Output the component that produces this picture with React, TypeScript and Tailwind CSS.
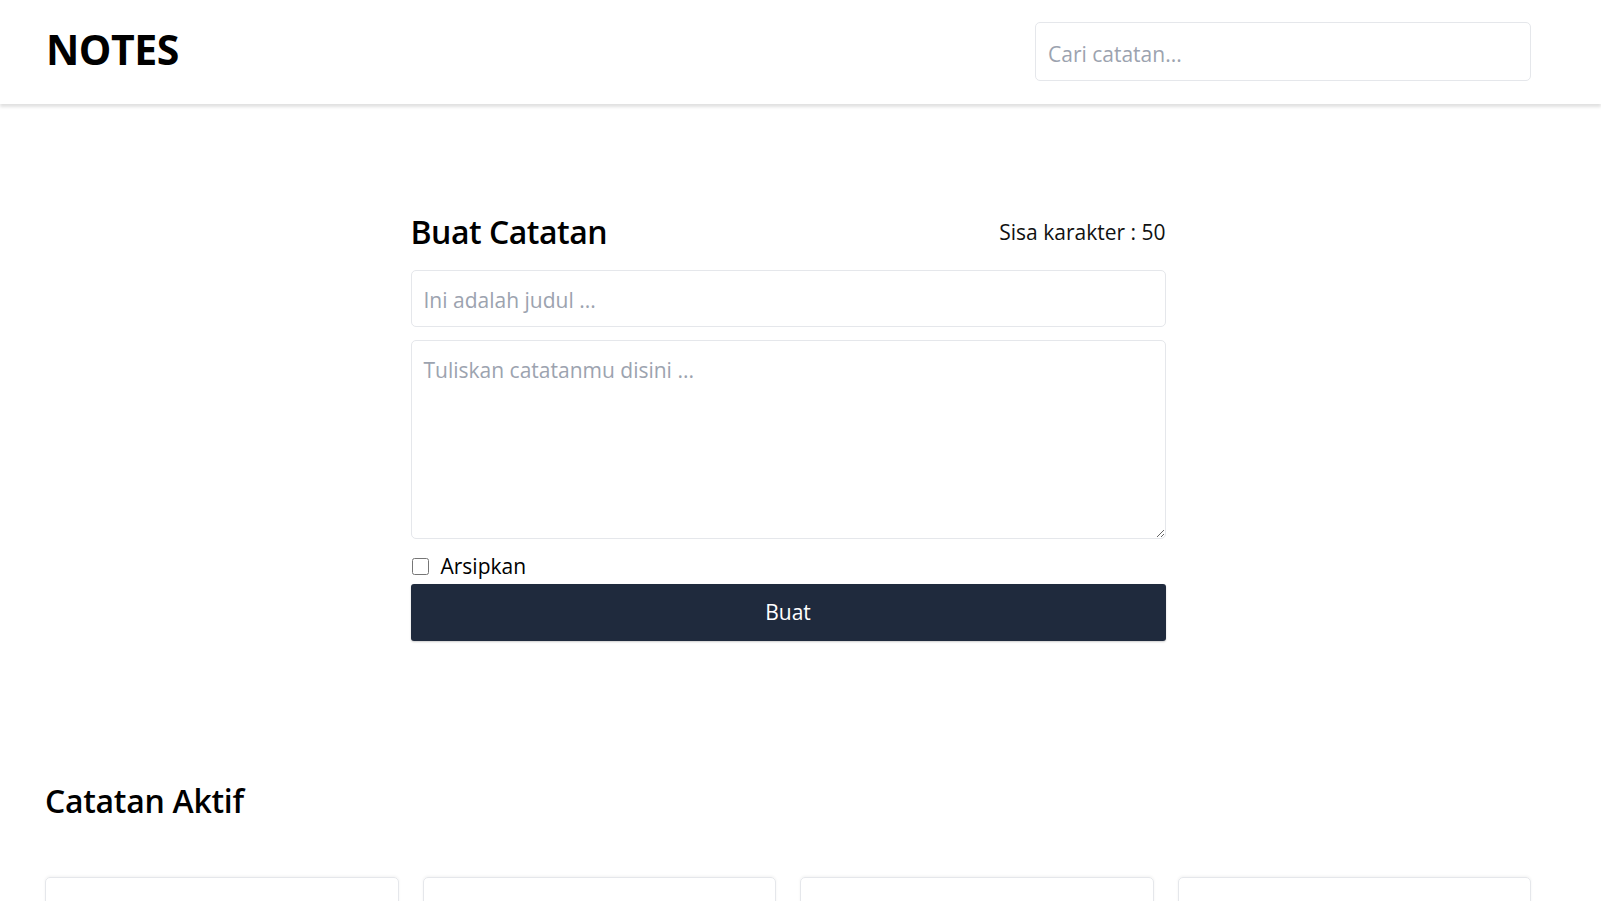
import React, { useState } from 'react';

const MAX_TITLE = 50;

export default function App() {
  const [title, setTitle] = useState('');
  const [body, setBody] = useState('');
  const [archived, setArchived] = useState(false);

  return (
    <div className="min-h-screen bg-white text-black" style={{ fontFamily: '"Open Sans", "Noto Sans", sans-serif' }}>
      {/* Header */}
      <header className="h-[104px] bg-white shadow-[0_3px_3px_rgba(0,0,0,0.12)] pl-[46px] pr-[70px] flex items-center justify-between">
        <h1 className="text-[41px] font-bold tracking-[-0.5px] leading-none -mt-[6px]">NOTES</h1>
        <input
          type="text"
          placeholder="Cari catatan..."
          className="w-[496px] h-[59px] -mt-[1px] px-[12px] pt-[5px] text-[21px] border border-[#e5e7eb] rounded-[5px] outline-none placeholder:text-[#9ca3af]"
        />
      </header>

      <main className="pl-[45px] pr-[70px]">
        {/* Form */}
        <section className="w-[755px] mx-auto pt-[108px]">
          <div className="flex items-center justify-between h-[40px]">
            <h2 className="text-[32px] font-semibold leading-none tracking-[-0.5px]">Buat Catatan</h2>
            <p className="text-[21px] text-[#111] mt-[1px]">Sisa karakter : {MAX_TITLE - title.length}</p>
          </div>
          <form className="flex flex-col mt-[18px]" onSubmit={(e) => e.preventDefault()}>
            <input
              type="text"
              value={title}
              onChange={(e) => setTitle(e.target.value.slice(0, MAX_TITLE))}
              placeholder="Ini adalah judul ..."
              className="h-[57px] px-[12px] pt-[2px] text-[21px] border border-[#e5e7eb] rounded-[5px] outline-none placeholder:text-[#9ca3af]"
            />
            <textarea
              value={body}
              onChange={(e) => setBody(e.target.value)}
              placeholder="Tuliskan catatanmu disini ..."
              className="mt-[13px] h-[199px] block px-[12px] py-[16px] text-[21px] leading-[26px] border border-[#e5e7eb] rounded-[5px] outline-none placeholder:text-[#9ca3af]"
            />
            <label className="flex items-center gap-[12px] mt-[13px] h-[29px] text-[21px]">
              <input
                type="checkbox"
                checked={archived}
                onChange={(e) => setArchived(e.target.checked)}
                className="w-[17px] h-[17px] ml-[1px]"
              />
              Arsipkan
            </label>
            <button
              type="submit"
              className="mt-[3px] h-[57px] bg-[#1f2a3d] text-white text-[21px] rounded-[3px] shadow-[0_1px_2px_rgba(0,0,0,0.2)]"
            >
              Buat
            </button>
          </form>
        </section>

        {/* Active notes */}
        <section className="pt-[140px]">
          <h2 className="h-[40px] flex items-center text-[32px] font-semibold leading-none tracking-[-0.3px]">Catatan Aktif</h2>
          <div className="grid grid-cols-4 gap-[24px] mt-[56px]">
            {[0, 1, 2, 3].map((i) => (
              <div
                key={i}
                className="h-[180px] border border-[#e5e7eb] rounded-[5px] shadow-[0_-1px_3px_rgba(0,0,0,0.05)]"
              />
            ))}
          </div>
        </section>
      </main>
    </div>
  );
}
